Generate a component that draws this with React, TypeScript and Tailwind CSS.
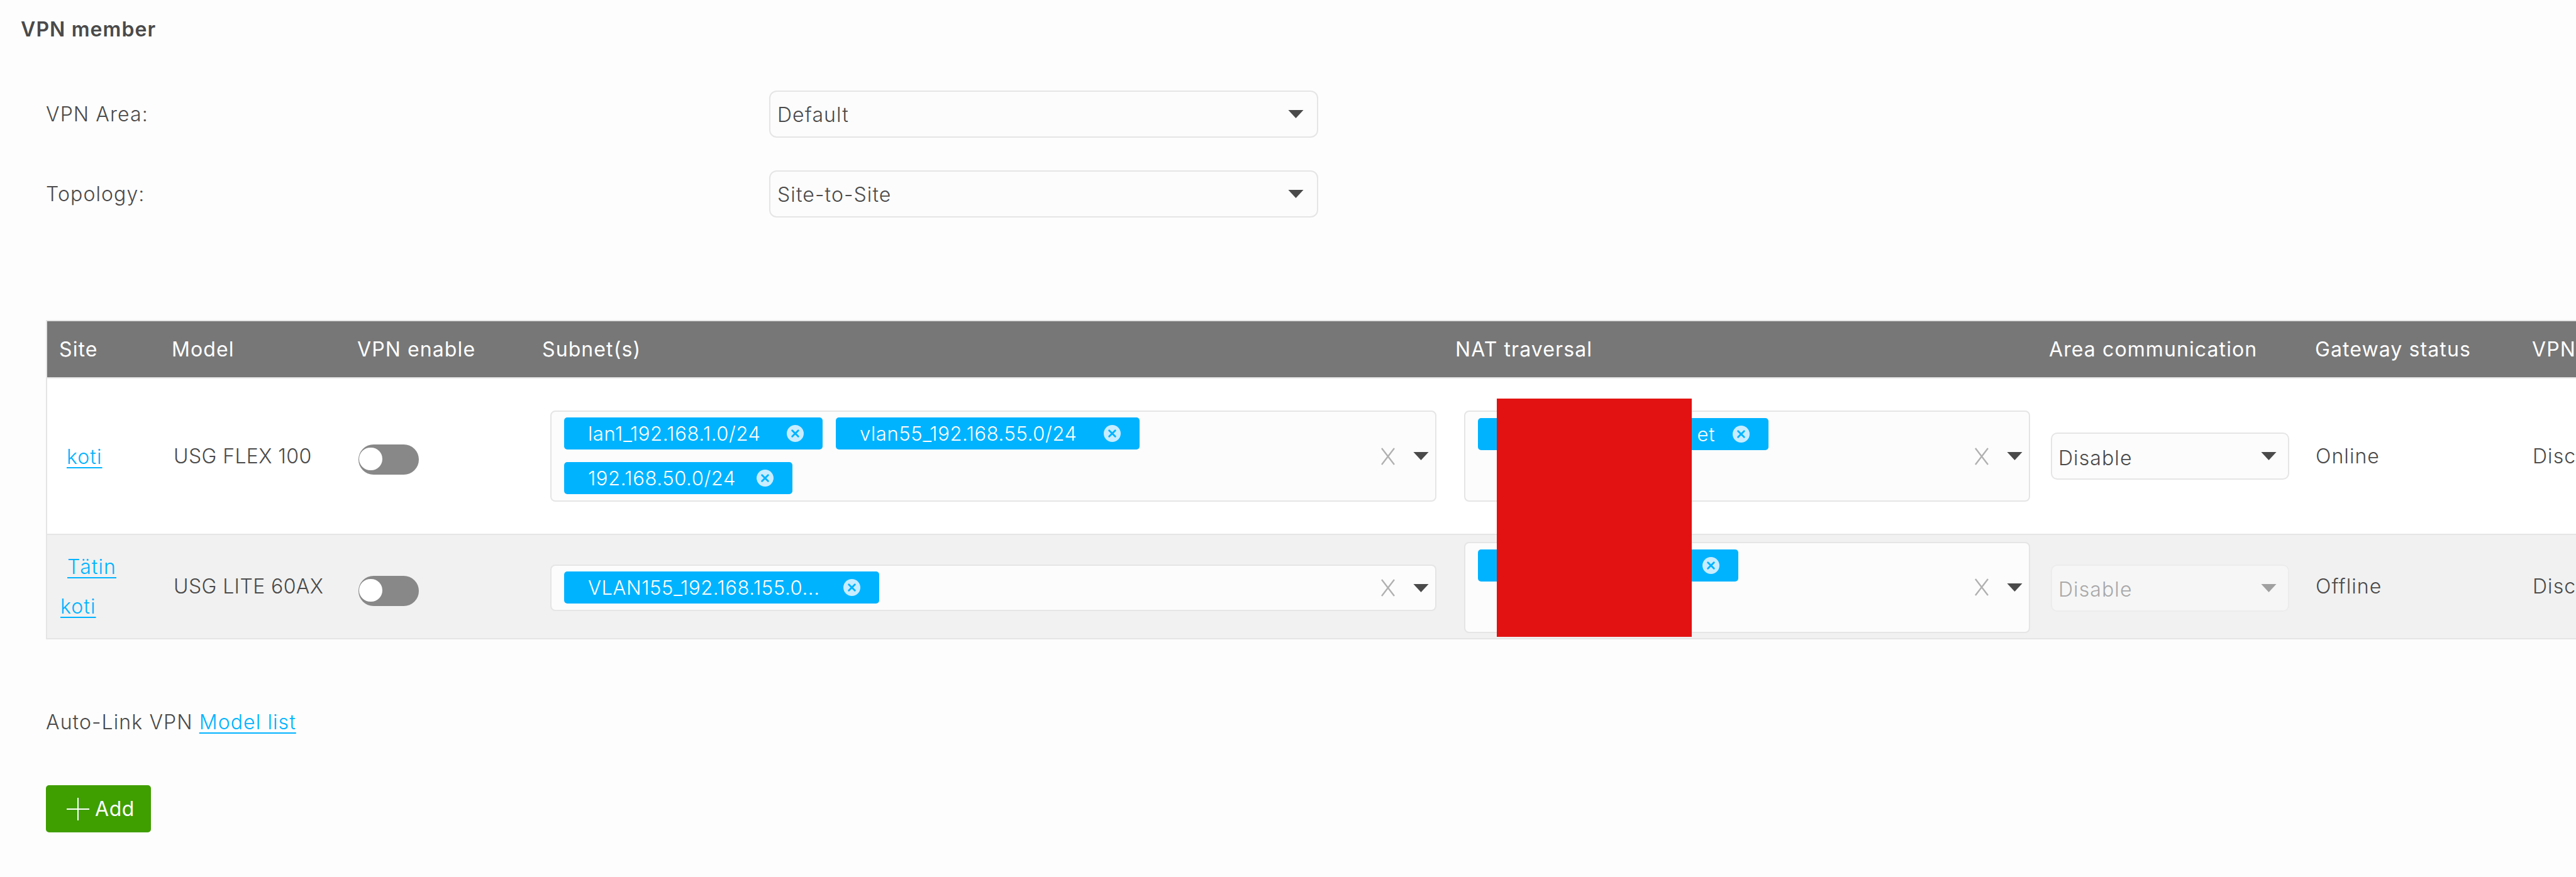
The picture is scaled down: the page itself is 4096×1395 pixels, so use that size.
import React from "react";

const FONT = "font-['Inter','Liberation_Sans',sans-serif]";
const LINK = "text-[#00b3ff] underline decoration-2 underline-offset-[5px]";

function Chip({ w, label, end }: { w: string; label: string; end?: boolean }) {
  return (
    <span className={`${w} h-[51px] rounded-[5px] bg-[#00b3ff] text-white flex items-center ${end ? "justify-end" : "justify-between"} pl-[38px] pr-[30px] shrink-0`}>
      <span className="text-[31px] leading-none font-light tracking-[0.6px] whitespace-nowrap">{label}</span>
      <svg viewBox="0 0 28 28" className="w-[27px] h-[27px] shrink-0 ml-[28px]">
        <circle cx="14" cy="14" r="14" fill="#c8edff" />
        <path d="M9 9l10 10M19 9L9 19" stroke="#00b3ff" strokeWidth="3" strokeLinecap="round" />
      </svg>
    </span>
  );
}

function Caret({ color = "#4a4a4a" }: { color?: string }) {
  return (
    <svg viewBox="0 0 26 14" className="w-[25px] h-[13px] shrink-0">
      <path d="M0 0h26L13 14z" fill={color} />
    </svg>
  );
}

function Controls() {
  return (
    <div className="flex items-center gap-[26px] pr-[10px] shrink-0">
      <svg viewBox="0 0 28 28" className="w-[28px] h-[28px]">
        <path d="M4 1l20 26M24 1L4 27" stroke="#b0b0b0" strokeWidth="2.4" />
      </svg>
      <Caret />
    </div>
  );
}

function MultiBox({ h, children, cls, pt }: { h: string; children: React.ReactNode; cls: string; pt: string }) {
  return (
    <div className={`${cls} ${h} flex items-center rounded-[8px] border-2 border-[#e5e5e5] bg-[#fcfcfc]`}>
      <div className={`flex-1 self-start flex flex-wrap gap-x-[21px] gap-y-[20px] pl-[20px] pr-[30px] ${pt}`}>{children}</div>
      <Controls />
    </div>
  );
}

function Toggle({ cls }: { cls: string }) {
  return (
    <div className={`${cls} w-[96px] h-[48px] rounded-full bg-[#888888] flex items-center pl-[1px]`}>
      <div className="w-[37px] h-[36px] -mt-[3px] rounded-full bg-white" />
    </div>
  );
}

function AreaSelect({ disabled, cls }: { disabled?: boolean; cls?: string }) {
  return (
    <div className={`${cls ?? ""} w-[379px] h-[75px] rounded-[10px] border-2 ${disabled ? "border-[#ececec] bg-[#f6f6f6] text-[#a8a8a8]" : "border-[#e5e5e5] bg-[#fcfcfc] text-[#4a4a4a]"} flex items-center justify-between pl-[10px] pr-[18px]`}>
      <span className="text-[32px] font-light leading-none pt-[6px]">Disable</span>
      <Caret color={disabled ? "#a0a0a0" : "#4a4a4a"} />
    </div>
  );
}

function FormRow({ label, value, cls }: { label: string; value: string; cls: string }) {
  return (
    <div className={`flex items-center ${cls}`}>
      <div className="w-[1150px] text-[32px] font-light text-[#4a4a4a] leading-none">{label}</div>
      <div className="w-[873px] h-[75px] rounded-[12px] border-2 border-[#e5e5e5] bg-[#fcfcfc] flex items-center justify-between pl-[11px] pr-[21px]">
        <span className="text-[32px] font-light text-[#4a4a4a] leading-none pt-[2px]">{value}</span>
        <Caret />
      </div>
    </div>
  );
}

const GRID = "grid grid-cols-[178px_295px_294px_1452px_944px_422px_345px_300px]";
const HEAD = [
  { t: "Site", c: "pl-[19px]" },
  { t: "Model", c: "pl-[20px]" },
  { t: "VPN enable", c: "pl-[20px]" },
  { t: "Subnet(s)", c: "pl-[20px]" },
  { t: "NAT traversal", c: "pl-[20px]" },
  { t: "Area communication", c: "pl-[20px]" },
  { t: "Gateway status", c: "pl-[21px]" },
  { t: "VPN", c: "pl-[21px]" },
];

export default function App() {
  return (
    <div className={`${FONT} relative w-[4096px] h-[1395px] overflow-hidden bg-[#fdfdfd] tracking-[1.1px]`}>
      <div className="pl-[33px] pt-[28px] h-[144px] text-[32px] leading-[38px] font-semibold text-[#4a4a4a]">VPN member</div>

      <div className="pl-[73px]">
        <FormRow label="VPN Area:" value="Default" cls="" />
        <FormRow label="Topology:" value="Site-to-Site" cls="mt-[52px]" />
      </div>

      <div className="ml-[73px] mt-[163px] w-[4300px] border-l-2 border-y-2 border-[#e5e5e5]">
        <div className={`${GRID} h-[89px] items-center bg-[#777777] text-white text-[32px] leading-none border-b-2 border-[#e5e5e5] box-content`}>
          {HEAD.map((h) => (
            <div key={h.t} className={`${h.c} whitespace-nowrap`}>{h.t}</div>
          ))}
        </div>

        <div className={`${GRID} h-[247px] items-center bg-white text-[32px] font-light text-[#4a4a4a] border-b-2 border-[#e5e5e5] box-content`}>
          <div className="pl-[31px] pt-[2px]"><a className={LINK}>koti</a></div>
          <div className="pl-[23px] whitespace-nowrap tracking-[0.4px]">USG FLEX 100</div>
          <div className="pl-[22px]"><Toggle cls="mt-[11px]" /></div>
          <div className="pl-[33px]">
            <MultiBox cls="w-[1409px]" h="h-[145px]" pt="pt-[9px]">
              <Chip w="w-[411px]" label="lan1_192.168.1.0/24" />
              <Chip w="w-[483px]" label="vlan55_192.168.55.0/24" />
              <Chip w="w-[363px]" label="192.168.50.0/24" />
            </MultiBox>
          </div>
          <div className="pl-[34px]">
            <MultiBox cls="w-[900px]" h="h-[145px]" pt="pt-[10px]">
              <Chip w="w-[462px]" label="et" end />
            </MultiBox>
          </div>
          <div className="pl-[23px]"><AreaSelect /></div>
          <div className="pl-[22px]">Online</div>
          <div className="pl-[22px] whitespace-nowrap">Disc</div>
        </div>

        <div className={`${GRID} h-[164px] items-center bg-[#f1f1f1] text-[32px] font-light text-[#4a4a4a]`}>
          <div className="pl-[32px] leading-[63px]">
            <a className={LINK}>Tätin</a>
            <br />
            <a className={`${LINK} -ml-[11px]`}>koti</a>
          </div>
          <div className="pl-[23px] whitespace-nowrap tracking-[0.4px]">USG LITE 60AX</div>
          <div className="pl-[22px]"><Toggle cls="mt-[14px]" /></div>
          <div className="pl-[33px]">
            <MultiBox cls="w-[1409px] mt-[4px]" h="h-[74px]" pt="pt-[9px]">
              <Chip w="w-[501px]" label="VLAN155_192.168.155.0..." />
            </MultiBox>
          </div>
          <div className="pl-[34px]">
            <MultiBox cls="w-[900px] mt-[2px]" h="h-[145px]" pt="pt-[10px]">
              <Chip w="w-[414px]" label="" end />
            </MultiBox>
          </div>
          <div className="pl-[23px]"><AreaSelect disabled cls="mt-[4px]" /></div>
          <div className="pl-[22px]">Offline</div>
          <div className="pl-[22px] whitespace-nowrap">Disc</div>
        </div>
      </div>

      <div className="pl-[73px] mt-[112px] text-[32px] font-light leading-[40px] text-[#4a4a4a]">
        Auto-Link VPN <a className={LINK}>Model list</a>
      </div>

      <div className="pl-[73px] mt-[80px]">
        <button className="w-[167px] h-[75px] rounded-[5px] bg-[#3f9e00] text-white flex items-center pl-[33px] gap-[9px] text-[32px] tracking-[0.6px]">
          <svg viewBox="0 0 36 36" className="w-[36px] h-[36px]"><path d="M18 0v36M0 18h36" stroke="#fff" strokeWidth="2" /></svg>
          Add
        </button>
      </div>

      <div className="absolute left-[2380px] top-[634px] w-[310px] h-[379px] bg-[#e21212]" />
    </div>
  );
}
